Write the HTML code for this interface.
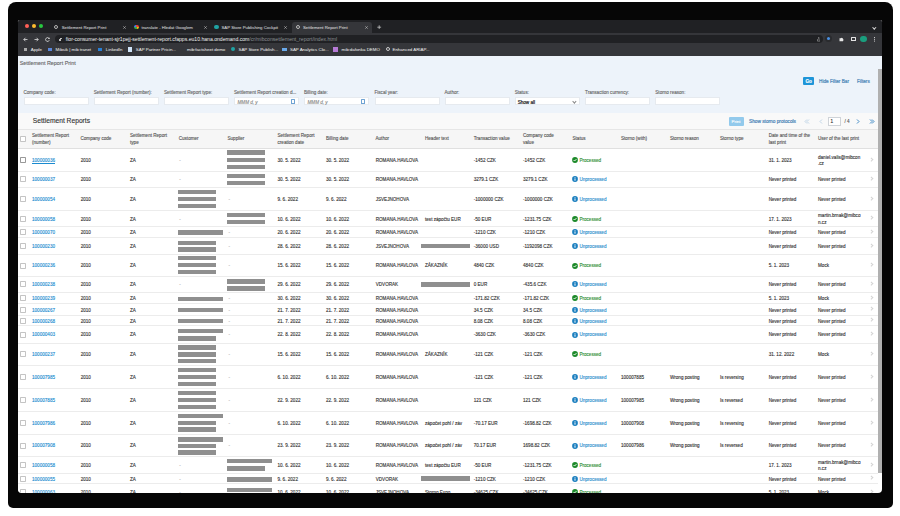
<!DOCTYPE html>
<html><head><meta charset="utf-8"><style>
*{margin:0;padding:0;box-sizing:border-box}
html,body{width:900px;height:516px;overflow:hidden;background:#fff;font-family:"Liberation Sans",sans-serif}
#bezel{position:absolute;left:7.8px;top:1.6px;width:885px;height:506.6px;background:#060606;border-radius:8px 8px 5px 5px}
#screen{position:absolute;left:18px;top:20px;width:863.6px;height:472.6px;overflow:hidden;background:#fff;border-radius:1.5px 1.5px 4px 4px}
#in{position:absolute;left:-18px;top:-20px;width:900px;height:516px}
#in div{position:absolute}
svg{display:block}
.t{white-space:nowrap;font-size:4.6px;line-height:6px;color:#333;-webkit-text-stroke:0.12px currentColor}
.link{color:#1a8bd0}
.dash{color:#999}
.green{color:#2f8f35}
.blue{color:#2a8dcc}
.h{color:#555}
.bar{height:4.4px;background:#8f8f8f}
.row{left:18px;width:860px;background:#fff;border-bottom:0.6px solid #ececec}
.cb{width:6px;height:6px;border:0.7px solid #c4c4c4;background:#fff;border-radius:0.8px}
.nav{width:2.6px;height:2.6px;border-right:0.6px solid #d2d2d2;border-top:0.6px solid #d2d2d2;transform:rotate(45deg)}
.flab{color:#666}
.inp{width:65px;height:7.8px;background:#fff;border:0.4px solid #e6eaef}
.ph{color:#888;font-style:italic}
.sel{color:#222;font-size:4.6px;-webkit-text-stroke:0.2px #222}
.cal{width:4.2px;height:4.6px;border:0.6px solid #6fa3d3;border-top-width:1.1px;border-radius:0.5px}
.chev{width:2.8px;height:2.8px;border-right:0.5px solid #8a8a8a;border-bottom:0.5px solid #8a8a8a;transform:rotate(45deg)}
.bm{font-size:4.4px;color:#f4f4f4;white-space:nowrap;line-height:6px}
.tab{font-size:4.3px;color:#e2e4e7;white-space:nowrap;line-height:6px}
</style></head><body>
<div id="bezel"></div>
<div id="screen"><div id="in">
  <!-- browser chrome -->
  <div style="left:18px;top:20px;width:864px;height:12.5px;background:#202124"></div>
  <div style="left:18px;top:32.5px;width:864px;height:23.2px;background:#35363a"></div>
  <div style="left:292px;top:21.5px;width:80px;height:11px;background:#35363a;border-radius:3px 3px 0 0"></div>
  <div style="left:25px;top:24.3px;width:4px;height:4px;border-radius:50%;background:#ff5f57"></div>
  <div style="left:31.8px;top:24.3px;width:4px;height:4px;border-radius:50%;background:#febc2e"></div>
  <div style="left:38.5px;top:24.3px;width:4px;height:4px;border-radius:50%;background:#28c840"></div>
  
  <div style="left:53.6px;top:24.6px;width:4.6px;height:4.6px;border-radius:50%;border:0.8px solid #b5b5b5"></div>
  <div class="tab" style="left:61.7px;top:24.6px">Settlement Report Print</div>
  <div style="left:123.3px;top:25.6px"><svg width="3" height="3" viewBox="0 0 6 6"><path d="M0.5 0.5 L5.5 5.5 M5.5 0.5 L0.5 5.5" stroke="#c8c8c8" stroke-width="1.1"/></svg></div>
  <div style="left:134.3px;top:24.6px;width:4.8px;height:4.8px;border-radius:50%;background:conic-gradient(#ea4335 0 25%,#fbbc05 0 50%,#34a853 0 75%,#4285f4 0)"></div>
  <div class="tab" style="left:141.5px;top:24.6px">translate - Hledat Googlem</div>
  <div style="left:203.5px;top:25.6px"><svg width="3" height="3" viewBox="0 0 6 6"><path d="M0.5 0.5 L5.5 5.5 M5.5 0.5 L0.5 5.5" stroke="#c8c8c8" stroke-width="1.1"/></svg></div>
  <div style="left:214px;top:24.6px;width:4.8px;height:4.8px;border-radius:50%;background:#1fa3a3"></div>
  <div class="tab" style="left:221.5px;top:24.6px">SAP Store Publishing Cockpit</div>
  <div style="left:284.3px;top:25.6px"><svg width="3" height="3" viewBox="0 0 6 6"><path d="M0.5 0.5 L5.5 5.5 M5.5 0.5 L0.5 5.5" stroke="#c8c8c8" stroke-width="1.1"/></svg></div>
  <div style="left:295.5px;top:24.6px;width:4.8px;height:4.8px;border-radius:50%;border:0.8px solid #bbb"></div>
  <div class="tab" style="left:303px;top:24.6px;color:#e6e6e6">Settlement Report Print</div>
  <div style="left:365px;top:25.6px"><svg width="3" height="3" viewBox="0 0 6 6"><path d="M0.5 0.5 L5.5 5.5 M5.5 0.5 L0.5 5.5" stroke="#c8c8c8" stroke-width="1.1"/></svg></div>
  <div style="left:377.3px;top:24.8px"><svg width="4.4" height="4.4" viewBox="0 0 8 8"><path d="M4 0.5 V7.5 M0.5 4 H7.5" stroke="#e0e0e0" stroke-width="1.2"/></svg></div>
  <div style="left:873px;top:26px;width:2.6px;height:2.6px;border-right:0.7px solid #ddd;border-bottom:0.7px solid #ddd;transform:rotate(45deg)"></div>

  <div style="left:55px;top:34.9px;width:768px;height:8.6px;background:#202124;border-radius:4.3px"></div>
  
  <div style="left:22.8px;top:36.8px"><svg width="5" height="5" viewBox="0 0 10 10"><path d="M9 5 H1.8 M5 1.5 L1.5 5 L5 8.5" stroke="#e8e8e8" stroke-width="1.5" fill="none"/></svg></div>
  <div style="left:34.2px;top:36.8px"><svg width="5" height="5" viewBox="0 0 10 10"><path d="M1 5 H8.2 M5 1.5 L8.5 5 L5 8.5" stroke="#e8e8e8" stroke-width="1.5" fill="none"/></svg></div>
  <div style="left:44.6px;top:36.8px"><svg width="5" height="5" viewBox="0 0 10 10"><path d="M8.3 3.2 A3.8 3.8 0 1 0 8.6 6.2" stroke="#e8e8e8" stroke-width="1.5" fill="none"/><path d="M9.2 0.8 V4.2 H5.8 Z" fill="#e8e8e8"/></svg></div>
  <div style="left:59.4px;top:38.9px;width:1.9px;height:1.8px;background:#c4c4c4;border-radius:0.3px"></div>
  <div style="left:59.8px;top:37.9px;width:1.1px;height:1.3px;border:0.45px solid #c4c4c4;border-bottom:none;border-radius:0.6px 0.6px 0 0"></div>
  <div class="tab" style="left:65.8px;top:36.3px;color:#f1f3f4;font-size:5.1px">fior-consumer-tenant-sjr1pejj-settlement-report.cfapps.eu10.hana.ondemand.com<span style="color:#8d9196">/cr/mibconsettlement_report/index.html</span></div>
  <div style="left:816.6px;top:37px"><svg width="3.6" height="4.6" viewBox="0 0 8 10"><path d="M1 4.5 V9 H7 V4.5 M4 6 V1 M2.3 2.7 L4 1 L5.7 2.7" stroke="#cfcfcf" stroke-width="1" fill="none"/></svg></div>
  <div style="left:824.8px;top:35.3px;width:7px;height:7px;border-radius:50%;background:#2a2b2e"></div>
  <div style="left:826.6px;top:37.1px;width:3.4px;height:3.4px;border-radius:50%;background:#4a90e2"></div>
  <div style="left:839.3px;top:37px"><svg width="5" height="4.5" viewBox="0 0 10 9"><path d="M1 2.5 H3.5 A1.2 1.2 0 0 1 6 2.5 H8 V4.5 A1.2 1.2 0 0 1 8 7 V8.5 H1 Z" fill="#e6e6e6"/></svg></div>
  <div style="left:851px;top:36.6px;width:4.6px;height:4.8px;border:0.7px solid #e3e3e3;border-right-width:1.8px;border-radius:0.5px"></div>
  <div style="left:860.3px;top:35.8px;width:6.6px;height:6.6px;border-radius:50%;background:#1a9e7e"></div>
  <div style="left:874px;top:36.6px;width:0.9px;height:0.9px;background:#ccc;box-shadow:0 1.8px #ccc,0 3.6px #ccc"></div>

  
  <div style="left:24.3px;top:48.3px;width:2.4px;height:2.4px;background:#aaa"></div>
  <div class="bm" style="left:30.8px;top:47.3px">Apple</div>
  <div style="left:47.5px;top:48.3px;width:4px;height:2.5px;background:#5b86d8"></div>
  <div class="bm" style="left:55.5px;top:47.3px">Mibsik | mib tranet</div>
  <div style="left:98.3px;top:47.5px;width:3.6px;height:3.8px;background:#2a7fd4"></div>
  <div class="bm" style="left:105.8px;top:47.3px">LinkedIn</div>
  <div style="left:128.2px;top:47.2px;width:3.8px;height:4.5px;background:#cfe3f7"></div>
  <div class="bm" style="left:135.8px;top:47.3px">SAP Partner Pricin...</div>
  <div class="bm" style="left:187px;top:47.3px">mib:factsheet demo</div>
  <div style="left:230.5px;top:47.3px;width:4.2px;height:4.2px;border-radius:50%;background:#1fa3a3"></div>
  <div class="bm" style="left:238.5px;top:47.3px">SAP Store Publish...</div>
  <div style="left:282px;top:48px;width:4.5px;height:2.6px;background:#6aa9e9"></div>
  <div class="bm" style="left:290px;top:47.3px">SAP Analytics Clo...</div>
  <div style="left:333px;top:47px;width:4.5px;height:4.8px;background:#b67ad6"></div>
  <div class="bm" style="left:341.5px;top:47.3px">mib:dafonka DEMO</div>
  <div style="left:386px;top:47.3px;width:4.2px;height:4.2px;border-radius:50%;border:0.7px solid #ccc"></div>
  <div class="bm" style="left:392.5px;top:47.3px">Enhanced ARIAP...</div>

  <!-- page -->
  <div style="left:18px;top:55.7px;width:864px;height:57.6px;background:#edf3fa"></div>
  <div class="t" style="left:19.7px;top:59.8px;font-size:5.4px;line-height:6.5px;color:#666">Settlement Report Print</div>
  <div style="left:802.5px;top:76.6px;width:11.5px;height:8.6px;background:#1f95d8;border-radius:1px"></div>
  <div class="t" style="left:805.4px;top:78.8px;color:#fff;font-weight:bold;font-size:4.6px">Go</div>
  <div class="t" style="left:819px;top:79.2px;color:#4a86b8;font-size:4.7px;-webkit-text-stroke:0.2px #4a86b8">Hide Filter Bar</div>
  <div class="t" style="left:857px;top:79.2px;color:#4a86b8;font-size:4.7px;-webkit-text-stroke:0.2px #4a86b8">Filters</div>
  <div class="t flab" style="left:23.5px;top:89.90px;">Company code:</div>
<div class="inp" style="left:23.5px;top:97.4px"></div>
<div class="t flab" style="left:93.7px;top:89.90px;">Settlement Report (number):</div>
<div class="inp" style="left:93.7px;top:97.4px"></div>
<div class="t flab" style="left:164px;top:89.90px;">Settlement Report type:</div>
<div class="inp" style="left:164px;top:97.4px"></div>
<div class="t flab" style="left:234px;top:89.90px;">Settlement Report creation d...</div>
<div class="inp" style="left:234px;top:97.4px"></div>
<div class="t ph" style="left:237.5px;top:99.50px;">MMM d, y</div>
<div class="cal" style="left:290.5px;top:99.2px"></div>
<div class="t flab" style="left:304px;top:89.90px;">Billing date:</div>
<div class="inp" style="left:304px;top:97.4px"></div>
<div class="t ph" style="left:307.5px;top:99.50px;">MMM d, y</div>
<div class="cal" style="left:360.5px;top:99.2px"></div>
<div class="t flab" style="left:374.5px;top:89.90px;">Fiscal year:</div>
<div class="inp" style="left:374.5px;top:97.4px"></div>
<div class="t flab" style="left:444.5px;top:89.90px;">Author:</div>
<div class="inp" style="left:444.5px;top:97.4px"></div>
<div class="t flab" style="left:514.7px;top:89.90px;">Status:</div>
<div class="inp" style="left:514.7px;top:97.4px"></div>
<div class="t sel" style="left:517.7px;top:99.50px;">Show all</div>
<div class="chev" style="left:572.7px;top:100px"></div>
<div class="t flab" style="left:585px;top:89.90px;">Transaction currency:</div>
<div class="inp" style="left:585px;top:97.4px"></div>
<div class="t flab" style="left:655.3px;top:89.90px;">Storno reason:</div>
<div class="inp" style="left:655.3px;top:97.4px"></div>
  <div style="left:18px;top:113.3px;width:860px;height:15.7px;background:#f9f9f9"></div>
  <div class="t" style="left:32.8px;top:117px;font-size:6.7px;line-height:8px;color:#333">Settlement Reports</div>
  <div style="left:728.7px;top:117px;width:15px;height:8.6px;background:#93caec;border-radius:1px"></div>
  <div class="t" style="left:731.5px;top:118.6px;color:#fff;font-size:4.4px">Print</div>
  <div class="t" style="left:749px;top:118.6px;color:#4a84b8;font-size:4.75px;-webkit-text-stroke:0.2px #4a84b8">Show storno protocols</div>
  <div style="left:804px;top:118.5px"><svg width="6" height="5" viewBox="0 0 12 10"><path d="M6 1 L2 5 L6 9 M10 1 L6 5 L10 9" stroke="#b3cde3" stroke-width="1.6" fill="none"/></svg></div>
  <div style="left:818.5px;top:118.5px"><svg width="4" height="5" viewBox="0 0 8 10"><path d="M6 1 L2 5 L6 9" stroke="#b3cde3" stroke-width="1.6" fill="none"/></svg></div>
  <div style="left:827.5px;top:116.6px;width:13.5px;height:9px;background:#fff;border:0.5px solid #cfd3d8"></div>
  <div class="t" style="left:830.5px;top:118.8px;color:#333">1</div>
  <div class="t" style="left:844.5px;top:118.8px;color:#555">/ 4</div>
  <div style="left:856px;top:118.5px"><svg width="4" height="5" viewBox="0 0 8 10"><path d="M2 1 L6 5 L2 9" stroke="#2d7fc0" stroke-width="1.8" fill="none"/></svg></div>
  <div style="left:868.5px;top:118.5px"><svg width="6" height="5" viewBox="0 0 12 10"><path d="M2 1 L6 5 L2 9 M6 1 L10 5 L6 9" stroke="#2d7fc0" stroke-width="1.8" fill="none"/></svg></div>
  <div style="left:18px;top:129px;width:860px;height:19.8px;background:#f6f6f6;border-top:0.6px solid #e6e6e6;border-bottom:0.6px solid #e0e0e0"></div>
  <div class="cb" style="left:20.1px;top:135.5px"></div>
  <div class="t h" style="left:32px;top:133.00px;">Settlement Report</div>
<div class="t h" style="left:32px;top:139.80px;">(number)</div>
<div class="t h" style="left:80.5px;top:136.40px;">Company code</div>
<div class="t h" style="left:130px;top:133.00px;">Settlement Report</div>
<div class="t h" style="left:130px;top:139.80px;">type</div>
<div class="t h" style="left:178.7px;top:136.40px;">Customer</div>
<div class="t h" style="left:227.5px;top:136.40px;">Supplier</div>
<div class="t h" style="left:277.5px;top:133.00px;">Settlement Report</div>
<div class="t h" style="left:277.5px;top:139.80px;">creation date</div>
<div class="t h" style="left:326px;top:136.40px;">Billing date</div>
<div class="t h" style="left:375.5px;top:136.40px;">Author</div>
<div class="t h" style="left:425px;top:136.40px;">Header text</div>
<div class="t h" style="left:473.7px;top:136.40px;">Transaction value</div>
<div class="t h" style="left:523px;top:133.00px;">Company code</div>
<div class="t h" style="left:523px;top:139.80px;">value</div>
<div class="t h" style="left:572.5px;top:136.40px;">Status</div>
<div class="t h" style="left:621px;top:136.40px;">Storno (with)</div>
<div class="t h" style="left:670px;top:136.40px;">Storno reason</div>
<div class="t h" style="left:720px;top:136.40px;">Storno type</div>
<div class="t h" style="left:768.7px;top:133.00px;">Date and time of the</div>
<div class="t h" style="left:768.7px;top:139.80px;">last print</div>
<div class="t h" style="left:818px;top:136.40px;">User of the last print</div>
  <div class="row" style="top:149.10px;height:22.80px"></div>
<div class="cb" style="left:20.1px;top:157.00px;border-color:#999"></div>
<div class="t link" style="left:32px;top:157.90px;text-decoration:underline">100000036</div>
<div class="t" style="left:80.7px;top:157.90px;">2010</div>
<div class="t" style="left:130px;top:157.90px;">ZA</div>
<div class="bar" style="left:227.1px;top:150.3px;width:38.4px"></div>
<div class="bar" style="left:227.1px;top:157.8px;width:38.4px"></div>
<div class="bar" style="left:227.1px;top:164.8px;width:38.4px"></div>
<div class="t dash" style="left:179.2px;top:157.90px;">-</div>
<div class="t" style="left:277.5px;top:157.90px;">30. 5. 2022</div>
<div class="t" style="left:326px;top:157.90px;">30. 5. 2022</div>
<div class="t" style="left:375.7px;top:157.90px;">ROMANA.HAVLOVA</div>
<div class="t" style="left:473.7px;top:157.90px;">-1452 CZK</div>
<div class="t" style="left:523px;top:157.90px;">-1452 CZK</div>
<div class="ico ok" style="left:572.2px;top:157.00px"><svg width="6" height="6" viewBox="0 0 10 10"><circle cx="5" cy="5" r="4.8" fill="#1d8a2a"/><path d="M2.7 5.1 L4.3 6.7 L7.4 3.5" stroke="#fff" stroke-width="1.5" fill="none"/></svg></div>
<div class="t green" style="left:579.4px;top:157.90px;">Processed</div>
<div class="t" style="left:768.7px;top:157.90px;">31. 1. 2023</div>
<div class="t" style="left:818px;top:154.50px;">daniel.valis@mibcon</div>
<div class="t" style="left:818px;top:161.30px;">.cz</div>
<div class="nav" style="left:869.5px;top:157.80px"></div>
<div class="row" style="top:171.90px;height:16.00px"></div>
<div class="cb" style="left:20.1px;top:176.40px;"></div>
<div class="t link" style="left:32px;top:177.30px;">100000037</div>
<div class="t" style="left:80.7px;top:177.30px;">2010</div>
<div class="t" style="left:130px;top:177.30px;">ZA</div>
<div class="bar" style="left:227.1px;top:173.9px;width:38.4px"></div>
<div class="bar" style="left:227.1px;top:180.8px;width:38.4px"></div>
<div class="t dash" style="left:179.2px;top:177.30px;">-</div>
<div class="t" style="left:277.5px;top:177.30px;">30. 5. 2022</div>
<div class="t" style="left:326px;top:177.30px;">30. 5. 2022</div>
<div class="t" style="left:375.7px;top:177.30px;">ROMANA.HAVLOVA</div>
<div class="t" style="left:473.7px;top:177.30px;">3279.1 CZK</div>
<div class="t" style="left:523px;top:177.30px;">3279.1 CZK</div>
<div class="ico" style="left:572.2px;top:176.40px"><svg width="6" height="6" viewBox="0 0 10 10"><circle cx="5" cy="5" r="4.8" fill="#1b7fbf"/><rect x="4.2" y="4.2" width="1.6" height="3.6" fill="#fff"/><rect x="4.2" y="2.2" width="1.6" height="1.4" fill="#fff"/></svg></div>
<div class="t blue" style="left:579.4px;top:177.30px;">Unprocessed</div>
<div class="t" style="left:768.7px;top:177.30px;">Never printed</div>
<div class="t" style="left:818px;top:177.30px;">Never printed</div>
<div class="nav" style="left:869.5px;top:177.20px"></div>
<div class="row" style="top:187.90px;height:23.20px"></div>
<div class="cb" style="left:20.1px;top:196.00px;"></div>
<div class="t link" style="left:32px;top:196.90px;">100000054</div>
<div class="t" style="left:80.7px;top:196.90px;">2010</div>
<div class="t" style="left:130px;top:196.90px;">ZA</div>
<div class="bar" style="left:177.8px;top:189.8px;width:38.4px"></div>
<div class="bar" style="left:177.8px;top:196.8px;width:38.4px"></div>
<div class="bar" style="left:177.8px;top:203.8px;width:38.4px"></div>
<div class="t dash" style="left:228.6px;top:196.90px;">-</div>
<div class="t" style="left:277.5px;top:196.90px;">9. 6. 2022</div>
<div class="t" style="left:326px;top:196.90px;">9. 6. 2022</div>
<div class="t" style="left:375.7px;top:196.90px;">JSVEJNOHOVA</div>
<div class="t" style="left:473.7px;top:196.90px;">-1000000 CZK</div>
<div class="t" style="left:523px;top:196.90px;">-1000000 CZK</div>
<div class="ico" style="left:572.2px;top:196.00px"><svg width="6" height="6" viewBox="0 0 10 10"><circle cx="5" cy="5" r="4.8" fill="#1b7fbf"/><rect x="4.2" y="4.2" width="1.6" height="3.6" fill="#fff"/><rect x="4.2" y="2.2" width="1.6" height="1.4" fill="#fff"/></svg></div>
<div class="t blue" style="left:579.4px;top:196.90px;">Unprocessed</div>
<div class="t" style="left:768.7px;top:196.90px;">Never printed</div>
<div class="t" style="left:818px;top:196.90px;">Never printed</div>
<div class="nav" style="left:869.5px;top:196.80px"></div>
<div class="row" style="top:211.10px;height:16.10px"></div>
<div class="cb" style="left:20.1px;top:215.65px;"></div>
<div class="t link" style="left:32px;top:216.55px;">100000058</div>
<div class="t" style="left:80.7px;top:216.55px;">2010</div>
<div class="t" style="left:130px;top:216.55px;">ZA</div>
<div class="bar" style="left:227.1px;top:213px;width:38.4px"></div>
<div class="bar" style="left:227.1px;top:220px;width:38.4px"></div>
<div class="t dash" style="left:179.2px;top:216.55px;">-</div>
<div class="t" style="left:277.5px;top:216.55px;">10. 6. 2022</div>
<div class="t" style="left:326px;top:216.55px;">10. 6. 2022</div>
<div class="t" style="left:375.7px;top:216.55px;">ROMANA.HAVLOVA</div>
<div class="t" style="left:425px;top:216.55px;">test zápočtu EUR</div>
<div class="t" style="left:473.7px;top:216.55px;">-50 EUR</div>
<div class="t" style="left:523px;top:216.55px;">-1231.75 CZK</div>
<div class="ico ok" style="left:572.2px;top:215.65px"><svg width="6" height="6" viewBox="0 0 10 10"><circle cx="5" cy="5" r="4.8" fill="#1d8a2a"/><path d="M2.7 5.1 L4.3 6.7 L7.4 3.5" stroke="#fff" stroke-width="1.5" fill="none"/></svg></div>
<div class="t green" style="left:579.4px;top:216.55px;">Processed</div>
<div class="t" style="left:768.7px;top:216.55px;">17. 1. 2023</div>
<div class="t" style="left:818px;top:213.15px;">martin.brnak@mibco</div>
<div class="t" style="left:818px;top:219.95px;">n.cz</div>
<div class="nav" style="left:869.5px;top:216.45px"></div>
<div class="row" style="top:227.20px;height:10.70px"></div>
<div class="cb" style="left:20.1px;top:229.05px;"></div>
<div class="t link" style="left:32px;top:229.95px;">100000070</div>
<div class="t" style="left:80.7px;top:229.95px;">2010</div>
<div class="t" style="left:130px;top:229.95px;">ZA</div>
<div class="bar" style="left:177.8px;top:230.3px;width:45.3px"></div>
<div class="t dash" style="left:228.6px;top:229.95px;">-</div>
<div class="t" style="left:277.5px;top:229.95px;">20. 6. 2022</div>
<div class="t" style="left:326px;top:229.95px;">20. 6. 2022</div>
<div class="t" style="left:375.7px;top:229.95px;">ROMANA.HAVLOVA</div>
<div class="t" style="left:473.7px;top:229.95px;">-1210 CZK</div>
<div class="t" style="left:523px;top:229.95px;">-1210 CZK</div>
<div class="ico" style="left:572.2px;top:229.05px"><svg width="6" height="6" viewBox="0 0 10 10"><circle cx="5" cy="5" r="4.8" fill="#1b7fbf"/><rect x="4.2" y="4.2" width="1.6" height="3.6" fill="#fff"/><rect x="4.2" y="2.2" width="1.6" height="1.4" fill="#fff"/></svg></div>
<div class="t blue" style="left:579.4px;top:229.95px;">Unprocessed</div>
<div class="t" style="left:768.7px;top:229.95px;">Never printed</div>
<div class="t" style="left:818px;top:229.95px;">Never printed</div>
<div class="nav" style="left:869.5px;top:229.85px"></div>
<div class="row" style="top:237.90px;height:17.00px"></div>
<div class="cb" style="left:20.1px;top:242.90px;"></div>
<div class="t link" style="left:32px;top:243.80px;">100000230</div>
<div class="t" style="left:80.7px;top:243.80px;">2010</div>
<div class="t" style="left:130px;top:243.80px;">ZA</div>
<div class="bar" style="left:177.8px;top:240.7px;width:38.4px"></div>
<div class="bar" style="left:177.8px;top:247.4px;width:38.4px"></div>
<div class="t dash" style="left:228.6px;top:243.80px;">-</div>
<div class="t" style="left:277.5px;top:243.80px;">28. 6. 2022</div>
<div class="t" style="left:326px;top:243.80px;">28. 6. 2022</div>
<div class="t" style="left:375.7px;top:243.80px;">JSVEJNOHOVA</div>
<div class="bar" style="left:420.7px;top:243.75px;width:49.3px"></div>
<div class="t" style="left:473.7px;top:243.80px;">-36000 USD</div>
<div class="t" style="left:523px;top:243.80px;">-1192098 CZK</div>
<div class="ico" style="left:572.2px;top:242.90px"><svg width="6" height="6" viewBox="0 0 10 10"><circle cx="5" cy="5" r="4.8" fill="#1b7fbf"/><rect x="4.2" y="4.2" width="1.6" height="3.6" fill="#fff"/><rect x="4.2" y="2.2" width="1.6" height="1.4" fill="#fff"/></svg></div>
<div class="t blue" style="left:579.4px;top:243.80px;">Unprocessed</div>
<div class="t" style="left:768.7px;top:243.80px;">Never printed</div>
<div class="t" style="left:818px;top:243.80px;">Never printed</div>
<div class="nav" style="left:869.5px;top:243.70px"></div>
<div class="row" style="top:254.90px;height:22.30px"></div>
<div class="cb" style="left:20.1px;top:262.55px;"></div>
<div class="t link" style="left:32px;top:263.45px;">100000236</div>
<div class="t" style="left:80.7px;top:263.45px;">2010</div>
<div class="t" style="left:130px;top:263.45px;">ZA</div>
<div class="bar" style="left:177.8px;top:256.1px;width:38.4px"></div>
<div class="bar" style="left:177.8px;top:263.1px;width:38.4px"></div>
<div class="bar" style="left:177.8px;top:270px;width:38.4px"></div>
<div class="t dash" style="left:228.6px;top:263.45px;">-</div>
<div class="t" style="left:277.5px;top:263.45px;">15. 6. 2022</div>
<div class="t" style="left:326px;top:263.45px;">15. 6. 2022</div>
<div class="t" style="left:375.7px;top:263.45px;">ROMANA.HAVLOVA</div>
<div class="t" style="left:425px;top:263.45px;">ZÁKAZNÍK</div>
<div class="t" style="left:473.7px;top:263.45px;">4840 CZK</div>
<div class="t" style="left:523px;top:263.45px;">4840 CZK</div>
<div class="ico ok" style="left:572.2px;top:262.55px"><svg width="6" height="6" viewBox="0 0 10 10"><circle cx="5" cy="5" r="4.8" fill="#1d8a2a"/><path d="M2.7 5.1 L4.3 6.7 L7.4 3.5" stroke="#fff" stroke-width="1.5" fill="none"/></svg></div>
<div class="t green" style="left:579.4px;top:263.45px;">Processed</div>
<div class="t" style="left:768.7px;top:263.45px;">5. 1. 2023</div>
<div class="t" style="left:818px;top:263.45px;">Mock</div>
<div class="nav" style="left:869.5px;top:263.35px"></div>
<div class="row" style="top:277.20px;height:15.50px"></div>
<div class="cb" style="left:20.1px;top:281.45px;"></div>
<div class="t link" style="left:32px;top:282.35px;">100000238</div>
<div class="t" style="left:80.7px;top:282.35px;">2010</div>
<div class="t" style="left:130px;top:282.35px;">ZA</div>
<div class="bar" style="left:227.1px;top:279.4px;width:38.4px"></div>
<div class="bar" style="left:227.1px;top:286.4px;width:38.4px"></div>
<div class="t dash" style="left:179.2px;top:282.35px;">-</div>
<div class="t" style="left:277.5px;top:282.35px;">29. 6. 2022</div>
<div class="t" style="left:326px;top:282.35px;">29. 6. 2022</div>
<div class="t" style="left:375.7px;top:282.35px;">VDVORAK</div>
<div class="bar" style="left:420.7px;top:282.30px;width:49.3px"></div>
<div class="t" style="left:473.7px;top:282.35px;">0 EUR</div>
<div class="t" style="left:523px;top:282.35px;">-435.6 CZK</div>
<div class="ico" style="left:572.2px;top:281.45px"><svg width="6" height="6" viewBox="0 0 10 10"><circle cx="5" cy="5" r="4.8" fill="#1b7fbf"/><rect x="4.2" y="4.2" width="1.6" height="3.6" fill="#fff"/><rect x="4.2" y="2.2" width="1.6" height="1.4" fill="#fff"/></svg></div>
<div class="t blue" style="left:579.4px;top:282.35px;">Unprocessed</div>
<div class="t" style="left:768.7px;top:282.35px;">Never printed</div>
<div class="t" style="left:818px;top:282.35px;">Never printed</div>
<div class="nav" style="left:869.5px;top:282.25px"></div>
<div class="row" style="top:292.70px;height:11.80px"></div>
<div class="cb" style="left:20.1px;top:295.10px;"></div>
<div class="t link" style="left:32px;top:296.00px;">100000239</div>
<div class="t" style="left:80.7px;top:296.00px;">2010</div>
<div class="t" style="left:130px;top:296.00px;">ZA</div>
<div class="bar" style="left:177.8px;top:296.7px;width:45.3px"></div>
<div class="t dash" style="left:228.6px;top:296.00px;">-</div>
<div class="t" style="left:277.5px;top:296.00px;">30. 6. 2022</div>
<div class="t" style="left:326px;top:296.00px;">30. 6. 2022</div>
<div class="t" style="left:375.7px;top:296.00px;">ROMANA.HAVLOVA</div>
<div class="t" style="left:473.7px;top:296.00px;">-171.82 CZK</div>
<div class="t" style="left:523px;top:296.00px;">-171.82 CZK</div>
<div class="ico ok" style="left:572.2px;top:295.10px"><svg width="6" height="6" viewBox="0 0 10 10"><circle cx="5" cy="5" r="4.8" fill="#1d8a2a"/><path d="M2.7 5.1 L4.3 6.7 L7.4 3.5" stroke="#fff" stroke-width="1.5" fill="none"/></svg></div>
<div class="t green" style="left:579.4px;top:296.00px;">Processed</div>
<div class="t" style="left:768.7px;top:296.00px;">5. 1. 2023</div>
<div class="t" style="left:818px;top:296.00px;">Mock</div>
<div class="nav" style="left:869.5px;top:295.90px"></div>
<div class="row" style="top:304.50px;height:11.30px"></div>
<div class="cb" style="left:20.1px;top:306.65px;"></div>
<div class="t link" style="left:32px;top:307.55px;">100000267</div>
<div class="t" style="left:80.7px;top:307.55px;">2010</div>
<div class="t" style="left:130px;top:307.55px;">ZA</div>
<div class="bar" style="left:177.8px;top:308.1px;width:45.3px"></div>
<div class="t dash" style="left:228.6px;top:307.55px;">-</div>
<div class="t" style="left:277.5px;top:307.55px;">21. 7. 2022</div>
<div class="t" style="left:326px;top:307.55px;">21. 7. 2022</div>
<div class="t" style="left:375.7px;top:307.55px;">ROMANA.HAVLOVA</div>
<div class="t" style="left:473.7px;top:307.55px;">34.5 CZK</div>
<div class="t" style="left:523px;top:307.55px;">34.5 CZK</div>
<div class="ico" style="left:572.2px;top:306.65px"><svg width="6" height="6" viewBox="0 0 10 10"><circle cx="5" cy="5" r="4.8" fill="#1b7fbf"/><rect x="4.2" y="4.2" width="1.6" height="3.6" fill="#fff"/><rect x="4.2" y="2.2" width="1.6" height="1.4" fill="#fff"/></svg></div>
<div class="t blue" style="left:579.4px;top:307.55px;">Unprocessed</div>
<div class="t" style="left:768.7px;top:307.55px;">Never printed</div>
<div class="t" style="left:818px;top:307.55px;">Never printed</div>
<div class="nav" style="left:869.5px;top:307.45px"></div>
<div class="row" style="top:315.80px;height:10.60px"></div>
<div class="cb" style="left:20.1px;top:317.60px;"></div>
<div class="t link" style="left:32px;top:318.50px;">100000268</div>
<div class="t" style="left:80.7px;top:318.50px;">2010</div>
<div class="t" style="left:130px;top:318.50px;">ZA</div>
<div class="bar" style="left:177.8px;top:318.9px;width:45.3px"></div>
<div class="t dash" style="left:228.6px;top:318.50px;">-</div>
<div class="t" style="left:277.5px;top:318.50px;">21. 7. 2022</div>
<div class="t" style="left:326px;top:318.50px;">21. 7. 2022</div>
<div class="t" style="left:375.7px;top:318.50px;">ROMANA.HAVLOVA</div>
<div class="t" style="left:473.7px;top:318.50px;">8.08 CZK</div>
<div class="t" style="left:523px;top:318.50px;">8.08 CZK</div>
<div class="ico" style="left:572.2px;top:317.60px"><svg width="6" height="6" viewBox="0 0 10 10"><circle cx="5" cy="5" r="4.8" fill="#1b7fbf"/><rect x="4.2" y="4.2" width="1.6" height="3.6" fill="#fff"/><rect x="4.2" y="2.2" width="1.6" height="1.4" fill="#fff"/></svg></div>
<div class="t blue" style="left:579.4px;top:318.50px;">Unprocessed</div>
<div class="t" style="left:768.7px;top:318.50px;">Never printed</div>
<div class="t" style="left:818px;top:318.50px;">Never printed</div>
<div class="nav" style="left:869.5px;top:318.40px"></div>
<div class="row" style="top:326.40px;height:17.20px"></div>
<div class="cb" style="left:20.1px;top:331.50px;"></div>
<div class="t link" style="left:32px;top:332.40px;">100000403</div>
<div class="t" style="left:80.7px;top:332.40px;">2010</div>
<div class="t" style="left:130px;top:332.40px;">ZA</div>
<div class="bar" style="left:177.8px;top:328.9px;width:45.3px"></div>
<div class="bar" style="left:177.8px;top:336.2px;width:38.4px"></div>
<div class="t dash" style="left:228.6px;top:332.40px;">-</div>
<div class="t" style="left:277.5px;top:332.40px;">22. 8. 2022</div>
<div class="t" style="left:326px;top:332.40px;">22. 8. 2022</div>
<div class="t" style="left:375.7px;top:332.40px;">ROMANA.HAVLOVA</div>
<div class="t" style="left:473.7px;top:332.40px;">-3630 CZK</div>
<div class="t" style="left:523px;top:332.40px;">-3630 CZK</div>
<div class="ico" style="left:572.2px;top:331.50px"><svg width="6" height="6" viewBox="0 0 10 10"><circle cx="5" cy="5" r="4.8" fill="#1b7fbf"/><rect x="4.2" y="4.2" width="1.6" height="3.6" fill="#fff"/><rect x="4.2" y="2.2" width="1.6" height="1.4" fill="#fff"/></svg></div>
<div class="t blue" style="left:579.4px;top:332.40px;">Unprocessed</div>
<div class="t" style="left:768.7px;top:332.40px;">Never printed</div>
<div class="t" style="left:818px;top:332.40px;">Never printed</div>
<div class="nav" style="left:869.5px;top:332.30px"></div>
<div class="row" style="top:343.60px;height:22.50px"></div>
<div class="cb" style="left:20.1px;top:351.35px;"></div>
<div class="t link" style="left:32px;top:352.25px;">100000237</div>
<div class="t" style="left:80.7px;top:352.25px;">2010</div>
<div class="t" style="left:130px;top:352.25px;">ZA</div>
<div class="bar" style="left:177.8px;top:345.3px;width:38.4px"></div>
<div class="bar" style="left:177.8px;top:352.2px;width:38.4px"></div>
<div class="bar" style="left:177.8px;top:359.1px;width:38.4px"></div>
<div class="t dash" style="left:228.6px;top:352.25px;">-</div>
<div class="t" style="left:277.5px;top:352.25px;">15. 6. 2022</div>
<div class="t" style="left:326px;top:352.25px;">15. 6. 2022</div>
<div class="t" style="left:375.7px;top:352.25px;">ROMANA.HAVLOVA</div>
<div class="t" style="left:425px;top:352.25px;">ZÁKAZNÍK</div>
<div class="t" style="left:473.7px;top:352.25px;">-121 CZK</div>
<div class="t" style="left:523px;top:352.25px;">-121 CZK</div>
<div class="ico ok" style="left:572.2px;top:351.35px"><svg width="6" height="6" viewBox="0 0 10 10"><circle cx="5" cy="5" r="4.8" fill="#1d8a2a"/><path d="M2.7 5.1 L4.3 6.7 L7.4 3.5" stroke="#fff" stroke-width="1.5" fill="none"/></svg></div>
<div class="t green" style="left:579.4px;top:352.25px;">Processed</div>
<div class="t" style="left:768.7px;top:352.25px;">31. 12. 2022</div>
<div class="t" style="left:818px;top:352.25px;">Mock</div>
<div class="nav" style="left:869.5px;top:352.15px"></div>
<div class="row" style="top:366.10px;height:22.70px"></div>
<div class="cb" style="left:20.1px;top:373.95px;"></div>
<div class="t link" style="left:32px;top:374.85px;">100007985</div>
<div class="t" style="left:80.7px;top:374.85px;">2010</div>
<div class="t" style="left:130px;top:374.85px;">ZA</div>
<div class="bar" style="left:177.8px;top:368px;width:38.4px"></div>
<div class="bar" style="left:177.8px;top:375px;width:38.4px"></div>
<div class="bar" style="left:177.8px;top:381.9px;width:38.4px"></div>
<div class="t dash" style="left:228.6px;top:374.85px;">-</div>
<div class="t" style="left:277.5px;top:374.85px;">6. 10. 2022</div>
<div class="t" style="left:326px;top:374.85px;">6. 10. 2022</div>
<div class="t" style="left:375.7px;top:374.85px;">ROMANA.HAVLOVA</div>
<div class="t" style="left:473.7px;top:374.85px;">-121 CZK</div>
<div class="t" style="left:523px;top:374.85px;">-121 CZK</div>
<div class="ico" style="left:572.2px;top:373.95px"><svg width="6" height="6" viewBox="0 0 10 10"><circle cx="5" cy="5" r="4.8" fill="#1b7fbf"/><rect x="4.2" y="4.2" width="1.6" height="3.6" fill="#fff"/><rect x="4.2" y="2.2" width="1.6" height="1.4" fill="#fff"/></svg></div>
<div class="t blue" style="left:579.4px;top:374.85px;">Unprocessed</div>
<div class="t" style="left:621px;top:374.85px;">100007885</div>
<div class="t" style="left:670px;top:374.85px;">Wrong posting</div>
<div class="t" style="left:720px;top:374.85px;">Is reversing</div>
<div class="t" style="left:768.7px;top:374.85px;">Never printed</div>
<div class="t" style="left:818px;top:374.85px;">Never printed</div>
<div class="nav" style="left:869.5px;top:374.75px"></div>
<div class="row" style="top:388.80px;height:22.80px"></div>
<div class="cb" style="left:20.1px;top:396.70px;"></div>
<div class="t link" style="left:32px;top:397.60px;">100007885</div>
<div class="t" style="left:80.7px;top:397.60px;">2010</div>
<div class="t" style="left:130px;top:397.60px;">ZA</div>
<div class="bar" style="left:177.8px;top:390.6px;width:38.4px"></div>
<div class="bar" style="left:177.8px;top:397.8px;width:38.4px"></div>
<div class="bar" style="left:177.8px;top:404.7px;width:38.4px"></div>
<div class="t dash" style="left:228.6px;top:397.60px;">-</div>
<div class="t" style="left:277.5px;top:397.60px;">22. 9. 2022</div>
<div class="t" style="left:326px;top:397.60px;">22. 9. 2022</div>
<div class="t" style="left:375.7px;top:397.60px;">ROMANA.HAVLOVA</div>
<div class="t" style="left:473.7px;top:397.60px;">121 CZK</div>
<div class="t" style="left:523px;top:397.60px;">121 CZK</div>
<div class="ico" style="left:572.2px;top:396.70px"><svg width="6" height="6" viewBox="0 0 10 10"><circle cx="5" cy="5" r="4.8" fill="#1b7fbf"/><rect x="4.2" y="4.2" width="1.6" height="3.6" fill="#fff"/><rect x="4.2" y="2.2" width="1.6" height="1.4" fill="#fff"/></svg></div>
<div class="t blue" style="left:579.4px;top:397.60px;">Unprocessed</div>
<div class="t" style="left:621px;top:397.60px;">100007985</div>
<div class="t" style="left:670px;top:397.60px;">Wrong posting</div>
<div class="t" style="left:720px;top:397.60px;">Is reversed</div>
<div class="t" style="left:768.7px;top:397.60px;">Never printed</div>
<div class="t" style="left:818px;top:397.60px;">Never printed</div>
<div class="nav" style="left:869.5px;top:397.50px"></div>
<div class="row" style="top:411.60px;height:23.30px"></div>
<div class="cb" style="left:20.1px;top:419.75px;"></div>
<div class="t link" style="left:32px;top:420.65px;">100007986</div>
<div class="t" style="left:80.7px;top:420.65px;">2010</div>
<div class="t" style="left:130px;top:420.65px;">ZA</div>
<div class="bar" style="left:177.8px;top:414px;width:45.3px"></div>
<div class="bar" style="left:177.8px;top:420.7px;width:38.4px"></div>
<div class="bar" style="left:177.8px;top:427.2px;width:38.4px"></div>
<div class="t dash" style="left:228.6px;top:420.65px;">-</div>
<div class="t" style="left:277.5px;top:420.65px;">6. 10. 2022</div>
<div class="t" style="left:326px;top:420.65px;">6. 10. 2022</div>
<div class="t" style="left:375.7px;top:420.65px;">ROMANA.HAVLOVA</div>
<div class="t" style="left:425px;top:420.65px;">zápočet pohl / záv</div>
<div class="t" style="left:473.7px;top:420.65px;">-70.17 EUR</div>
<div class="t" style="left:523px;top:420.65px;">-1698.82 CZK</div>
<div class="ico" style="left:572.2px;top:419.75px"><svg width="6" height="6" viewBox="0 0 10 10"><circle cx="5" cy="5" r="4.8" fill="#1b7fbf"/><rect x="4.2" y="4.2" width="1.6" height="3.6" fill="#fff"/><rect x="4.2" y="2.2" width="1.6" height="1.4" fill="#fff"/></svg></div>
<div class="t blue" style="left:579.4px;top:420.65px;">Unprocessed</div>
<div class="t" style="left:621px;top:420.65px;">100007908</div>
<div class="t" style="left:670px;top:420.65px;">Wrong posting</div>
<div class="t" style="left:720px;top:420.65px;">Is reversing</div>
<div class="t" style="left:768.7px;top:420.65px;">Never printed</div>
<div class="t" style="left:818px;top:420.65px;">Never printed</div>
<div class="nav" style="left:869.5px;top:420.55px"></div>
<div class="row" style="top:434.90px;height:22.30px"></div>
<div class="cb" style="left:20.1px;top:442.55px;"></div>
<div class="t link" style="left:32px;top:443.45px;">100007908</div>
<div class="t" style="left:80.7px;top:443.45px;">2010</div>
<div class="t" style="left:130px;top:443.45px;">ZA</div>
<div class="bar" style="left:177.8px;top:437.2px;width:45.3px"></div>
<div class="bar" style="left:177.8px;top:443.9px;width:38.4px"></div>
<div class="bar" style="left:177.8px;top:450.4px;width:38.4px"></div>
<div class="t dash" style="left:228.6px;top:443.45px;">-</div>
<div class="t" style="left:277.5px;top:443.45px;">23. 9. 2022</div>
<div class="t" style="left:326px;top:443.45px;">23. 9. 2022</div>
<div class="t" style="left:375.7px;top:443.45px;">ROMANA.HAVLOVA</div>
<div class="t" style="left:425px;top:443.45px;">zápočet pohl / záv</div>
<div class="t" style="left:473.7px;top:443.45px;">70.17 EUR</div>
<div class="t" style="left:523px;top:443.45px;">1698.82 CZK</div>
<div class="ico" style="left:572.2px;top:442.55px"><svg width="6" height="6" viewBox="0 0 10 10"><circle cx="5" cy="5" r="4.8" fill="#1b7fbf"/><rect x="4.2" y="4.2" width="1.6" height="3.6" fill="#fff"/><rect x="4.2" y="2.2" width="1.6" height="1.4" fill="#fff"/></svg></div>
<div class="t blue" style="left:579.4px;top:443.45px;">Unprocessed</div>
<div class="t" style="left:621px;top:443.45px;">100007986</div>
<div class="t" style="left:670px;top:443.45px;">Wrong posting</div>
<div class="t" style="left:720px;top:443.45px;">Is reversed</div>
<div class="t" style="left:768.7px;top:443.45px;">Never printed</div>
<div class="t" style="left:818px;top:443.45px;">Never printed</div>
<div class="nav" style="left:869.5px;top:443.35px"></div>
<div class="row" style="top:457.20px;height:16.60px"></div>
<div class="cb" style="left:20.1px;top:462.00px;"></div>
<div class="t link" style="left:32px;top:462.90px;">100000058</div>
<div class="t" style="left:80.7px;top:462.90px;">2010</div>
<div class="t" style="left:130px;top:462.90px;">ZA</div>
<div class="bar" style="left:227.1px;top:459.1px;width:44.9px"></div>
<div class="bar" style="left:227.1px;top:466.4px;width:38.4px"></div>
<div class="t dash" style="left:179.2px;top:462.90px;">-</div>
<div class="t" style="left:277.5px;top:462.90px;">10. 6. 2022</div>
<div class="t" style="left:326px;top:462.90px;">10. 6. 2022</div>
<div class="t" style="left:375.7px;top:462.90px;">ROMANA.HAVLOVA</div>
<div class="t" style="left:425px;top:462.90px;">test zápočtu EUR</div>
<div class="t" style="left:473.7px;top:462.90px;">-50 EUR</div>
<div class="t" style="left:523px;top:462.90px;">-1231.75 CZK</div>
<div class="ico ok" style="left:572.2px;top:462.00px"><svg width="6" height="6" viewBox="0 0 10 10"><circle cx="5" cy="5" r="4.8" fill="#1d8a2a"/><path d="M2.7 5.1 L4.3 6.7 L7.4 3.5" stroke="#fff" stroke-width="1.5" fill="none"/></svg></div>
<div class="t green" style="left:579.4px;top:462.90px;">Processed</div>
<div class="t" style="left:768.7px;top:462.90px;">17. 1. 2023</div>
<div class="t" style="left:818px;top:459.50px;">martin.brnak@mibco</div>
<div class="t" style="left:818px;top:466.30px;">n.cz</div>
<div class="nav" style="left:869.5px;top:462.80px"></div>
<div class="row" style="top:473.80px;height:10.60px"></div>
<div class="cb" style="left:20.1px;top:475.60px;"></div>
<div class="t link" style="left:32px;top:476.50px;">100000055</div>
<div class="t" style="left:80.7px;top:476.50px;">2010</div>
<div class="t" style="left:130px;top:476.50px;">ZA</div>
<div class="bar" style="left:227.1px;top:477.2px;width:44.9px"></div>
<div class="t dash" style="left:179.2px;top:476.50px;">-</div>
<div class="t" style="left:277.5px;top:476.50px;">9. 6. 2022</div>
<div class="t" style="left:326px;top:476.50px;">9. 6. 2022</div>
<div class="t" style="left:375.7px;top:476.50px;">VDVORAK</div>
<div class="bar" style="left:420.7px;top:476.45px;width:49.3px"></div>
<div class="t" style="left:473.7px;top:476.50px;">-1210 CZK</div>
<div class="t" style="left:523px;top:476.50px;">-1210 CZK</div>
<div class="ico" style="left:572.2px;top:475.60px"><svg width="6" height="6" viewBox="0 0 10 10"><circle cx="5" cy="5" r="4.8" fill="#1b7fbf"/><rect x="4.2" y="4.2" width="1.6" height="3.6" fill="#fff"/><rect x="4.2" y="2.2" width="1.6" height="1.4" fill="#fff"/></svg></div>
<div class="t blue" style="left:579.4px;top:476.50px;">Unprocessed</div>
<div class="t" style="left:768.7px;top:476.50px;">Never printed</div>
<div class="t" style="left:818px;top:476.50px;">Never printed</div>
<div class="nav" style="left:869.5px;top:476.40px"></div>
<div class="row" style="top:484.40px;height:16.10px"></div>
<div class="cb" style="left:20.1px;top:488.95px;"></div>
<div class="t link" style="left:32px;top:489.85px;">100000063</div>
<div class="t" style="left:80.7px;top:489.85px;">2010</div>
<div class="t" style="left:130px;top:489.85px;">ZA</div>
<div class="bar" style="left:227.1px;top:487.8px;width:44.9px"></div>
<div class="t dash" style="left:179.2px;top:489.85px;">-</div>
<div class="t" style="left:277.5px;top:489.85px;">10. 6. 2022</div>
<div class="t" style="left:326px;top:489.85px;">10. 6. 2022</div>
<div class="t" style="left:375.7px;top:489.85px;">JSVEJNOHOVA</div>
<div class="t" style="left:425px;top:489.85px;">Storno Expo</div>
<div class="t" style="left:473.7px;top:489.85px;">-34625 CZK</div>
<div class="t" style="left:523px;top:489.85px;">-34625 CZK</div>
<div class="ico ok" style="left:572.2px;top:488.95px"><svg width="6" height="6" viewBox="0 0 10 10"><circle cx="5" cy="5" r="4.8" fill="#1d8a2a"/><path d="M2.7 5.1 L4.3 6.7 L7.4 3.5" stroke="#fff" stroke-width="1.5" fill="none"/></svg></div>
<div class="t green" style="left:579.4px;top:489.85px;">Processed</div>
<div class="t" style="left:768.7px;top:489.85px;">5. 1. 2023</div>
<div class="t" style="left:818px;top:489.85px;">Mock</div>
<div class="nav" style="left:869.5px;top:489.75px"></div>
  <div style="left:878px;top:69.4px;width:3.6px;height:404px;background:#b0b0b0"></div>
</div></div>
</body></html>
